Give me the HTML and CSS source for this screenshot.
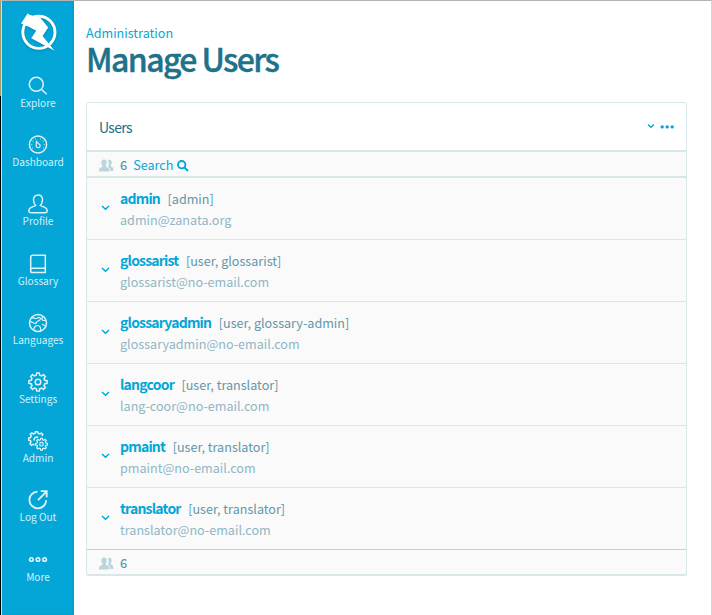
FILE: index.html
```html
<!DOCTYPE html>
<html lang="en">
<head>
<meta charset="utf-8">
<title>Manage Users</title>
<link rel="stylesheet" href="styles.css">
</head>
<body>
<div class="app">
  <div class="edge"></div>
  <nav class="sidebar">
    <a class="logo">
      <svg width="38" height="40" viewBox="0 0 38 40"><circle cx="18.9" cy="19.3" r="16.1" fill="none" stroke="#fff" stroke-width="2.9"/><path d="M7.8 .2 L9.6 1.8 L20.5 5 L28.2 14.6 L22.6 23 L34.5 37.7 L11.2 25.2 L16.2 17.8 L8.2 13.6 L1 10.4 Z" fill="#fff"/></svg>
    </a>
    <a class="item"><svg class="icon" viewBox="0 0 20 20"><circle cx="8.3" cy="8.3" r="7"/><path d="M13.3 13.3 L18.7 18.2"/></svg><span>Explore</span></a>
    <a class="item"><svg class="icon" viewBox="0 0 20 20"><circle cx="10" cy="9.5" r="8.6"/><path class="dots" d="M4.5 13v.1M3.8 9.5v.1M5 6v.1M7.5 3.8v.1M12.5 3.8v.1M15 6v.1M16.2 9.5v.1M15.5 13v.1"/><path d="M8.4 6.5 L10.7 8.8 A2 2 0 1 1 8.2 10.7 Z" stroke-width="1.2"/></svg><span>Dashboard</span></a>
    <a class="item"><svg class="icon" viewBox="0 0 20 20"><path d="M7.7 11.5C6.2 10.2 5.5 8 5.5 5.8C5.5 2.8 7.3.9 10 .9S14.5 2.8 14.5 5.8C14.5 8 13.8 10.2 12.3 11.5C14.3 13 19.2 12.7 19.2 16.5C19.2 18.2 18.4 18.8 17 18.8H3C1.6 18.8.8 18.2.8 16.5C.8 12.7 5.7 13 7.7 11.5Z"/></svg><span>Profile</span></a>
    <a class="item"><svg class="icon" viewBox="0 0 20 20"><path d="M17.3 14.3H4.5C1.8 14.3 2 18.5 4.5 18.5H17.3V1.2H4.8C3.4 1.2 2.7 1.8 2.7 3.2V16.5"/></svg><span>Glossary</span></a>
    <a class="item"><svg class="icon" viewBox="0 0 20 20"><circle cx="10" cy="10" r="8.5"/><path d="M3.5 5.2C6 3.7 6.2 6.5 9 5.2C11 3.8 13.3 4.5 12 6.8C10.5 8.5 9 7.5 8.3 9.8C6.7 12 4.6 8.3 1.6 8.7M14.7 3.4C12.5 7.2 15 8 18.2 7.2M6 17.4C5.4 14.4 8 11.6 10.7 12.8C14.2 14.3 11.3 16 13.2 17.8M14 11.2L17.5 13" stroke-width="1.2"/></svg><span>Languages</span></a>
    <a class="item"><svg class="icon" viewBox="0 0 20 20"><path d="M8.3 3.2 L8.7 .9 H11.3 L11.7 3.2 L13.6 4 L15.5 2.6 L17.4 4.5 L16 6.4 L16.8 8.3 L19.1 8.7 V11.3 L16.8 11.7 L16 13.6 L17.4 15.5 L15.5 17.4 L13.6 16 L11.7 16.8 L11.3 19.1 H8.7 L8.3 16.8 L6.4 16 L4.5 17.4 L2.6 15.5 L4 13.6 L3.2 11.7 L.9 11.3 V8.7 L3.2 8.3 L4 6.4 L2.6 4.5 L4.5 2.6 L6.4 4Z"/><circle cx="10" cy="10" r="2.8"/></svg><span>Settings</span></a>
    <a class="item"><svg class="icon" viewBox="0 0 20 20"><path d="M6.5 14.2L5 13.4L3.4 14.3L2 12.7L3 11.2L2.4 9.7L.7 9.1V7L2.5 6.5L3.2 4.9L2.3 3.3L3.9 2L5.4 2.9L7 2.3L7.5.8H9.6L10.2 2.3L11.8 2.9L13.3 2.1L14.8 3.5L14 5M6.2 9.6C5.5 7.2 8 5.4 10.2 6.3"/><g transform="translate(7 6.7) scale(.65)"><path stroke-width="1.8" d="M8.3 3.2 L8.7 .9 H11.3 L11.7 3.2 L13.6 4 L15.5 2.6 L17.4 4.5 L16 6.4 L16.8 8.3 L19.1 8.7 V11.3 L16.8 11.7 L16 13.6 L17.4 15.5 L15.5 17.4 L13.6 16 L11.7 16.8 L11.3 19.1 H8.7 L8.3 16.8 L6.4 16 L4.5 17.4 L2.6 15.5 L4 13.6 L3.2 11.7 L.9 11.3 V8.7 L3.2 8.3 L4 6.4 L2.6 4.5 L4.5 2.6 L6.4 4Z"/><circle cx="10" cy="10" r="2.8" stroke-width="1.8"/></g></svg><span>Admin</span></a>
    <a class="item"><svg class="icon" viewBox="0 0 20 20"><path d="M9.5 1.6A8.4 8.4 0 1 0 18.2 10.2M10 10.2L18.2 1.8M12.7 1.2H18.7V7.2" stroke-width="1.8"/></svg><span>Log Out</span></a>
    <a class="item"><svg class="icon" viewBox="0 0 20 20"><g stroke-width="1.6"><circle cx="3.4" cy="9.5" r="1.8"/><circle cx="10" cy="9.5" r="1.8"/><circle cx="16.6" cy="9.5" r="1.8"/></g></svg><span>More</span></a>
  </nav>
  <main class="main">
    <a class="crumb">Administration</a>
    <h1>Manage Users</h1>
    <section class="card">
      <header class="card-head"><h2>Users</h2><svg width="28" height="8" viewBox="0 0 28 8"><path d="M2 1.5L5 4.3L8 1.5" fill="none" stroke="#03a6d7" stroke-width="1.3"/><g fill="#03a6d7"><circle cx="16.2" cy="3.9" r="1.7"/><circle cx="21.2" cy="3.9" r="1.7"/><circle cx="26.2" cy="3.9" r="1.7"/></g></svg></header>
      <div class="bar search"><svg class="people" viewBox="0 0 15 13"><path d="M9 1.2C11-.1 13 1.2 12.7 3.5C12.6 5 11.8 5.8 11.7 7.2L14.2 8.8V12H11.2C11.2 9.5 10.5 9 8.7 7.8C10.2 6 9.9 3.5 9 1.2Z"/><path d="M5 .4C7.3.4 8 2 7.7 4C7.5 5.5 6.7 6 6.7 7.6C8 8.8 10.3 8.8 10.4 11V12.6H0V11C.1 8.8 2.3 8.8 3.5 7.6C3.5 6 2.5 5.3 2.4 4C2.1 2 2.8.4 5 .4Z"/></svg><b>6</b><a>Search</a><svg class="find" viewBox="0 0 12 12"><circle cx="4.7" cy="4.7" r="3.7"/><path d="M7.5 7.5L11 11"/></svg></div>
      <ul>
        <li><svg class="chev" viewBox="0 0 9 6"><path d="M1 1L4.5 4.2L8 1"/></svg><div><p><a>admin</a><span>[admin]</span></p><p class="mail">admin@zanata.org</p></div></li>
        <li><svg class="chev" viewBox="0 0 9 6"><path d="M1 1L4.5 4.2L8 1"/></svg><div><p><a>glossarist</a><span>[user, glossarist]</span></p><p class="mail">glossarist@no-email.com</p></div></li>
        <li><svg class="chev" viewBox="0 0 9 6"><path d="M1 1L4.5 4.2L8 1"/></svg><div><p><a>glossaryadmin</a><span>[user, glossary-admin]</span></p><p class="mail">glossaryadmin@no-email.com</p></div></li>
        <li><svg class="chev" viewBox="0 0 9 6"><path d="M1 1L4.5 4.2L8 1"/></svg><div><p><a>langcoor</a><span>[user, translator]</span></p><p class="mail">lang-coor@no-email.com</p></div></li>
        <li><svg class="chev" viewBox="0 0 9 6"><path d="M1 1L4.5 4.2L8 1"/></svg><div><p><a>pmaint</a><span>[user, translator]</span></p><p class="mail">pmaint@no-email.com</p></div></li>
        <li><svg class="chev" viewBox="0 0 9 6"><path d="M1 1L4.5 4.2L8 1"/></svg><div><p><a>translator</a><span>[user, translator]</span></p><p class="mail">translator@no-email.com</p></div></li>
      </ul>
      <div class="bar"><svg class="people" viewBox="0 0 15 13"><path d="M9 1.2C11-.1 13 1.2 12.7 3.5C12.6 5 11.8 5.8 11.7 7.2L14.2 8.8V12H11.2C11.2 9.5 10.5 9 8.7 7.8C10.2 6 9.9 3.5 9 1.2Z"/><path d="M5 .4C7.3.4 8 2 7.7 4C7.5 5.5 6.7 6 6.7 7.6C8 8.8 10.3 8.8 10.4 11V12.6H0V11C.1 8.8 2.3 8.8 3.5 7.6C3.5 6 2.5 5.3 2.4 4C2.1 2 2.8.4 5 .4Z"/></svg><b>6</b></div>
    </section>
  </main>
</div>
</body>
</html>
```
FILE: styles.css
```css
* { box-sizing: border-box; }
body, h1, h2, p, ul { margin: 0; padding: 0; }
body { font-family: "Noto Sans CJK SC", "Noto Sans", sans-serif; font-size: 12.6px; background: #fff; color: #20718a; overflow: hidden; }
.app { display: flex; height: 615px; border-top: 1px solid #b4b4b4; border-right: 1px solid #d5d5d5; }
.edge { width: 2px; border-right: 1px solid #c4e4ee; background: linear-gradient(#a59a63 95px, #000 95px); }
.sidebar { width: 72px; background: #03a6d7; box-shadow: inset -1px 0 2px #0297c6; display: flex; flex-direction: column; align-items: center; }
.logo { height: 66px; padding: 12px 0 0 1px; }
.logo svg { display: block; filter: drop-shadow(0 1px 1px #0288b0); }
.item { height: 59.2px; display: flex; flex-direction: column; align-items: center; padding-top: 9px; color: #d5f0f9; font-size: 10.1px; line-height: 14px; }
.icon { display: block; width: 20px; height: 20px; flex: none; fill: none; stroke: #dff4fb; stroke-width: 1.5; }
.dots { stroke-linecap: round; stroke-width: 1; }
.main { padding: 23px 24px 0 12px; flex: 1; }
.crumb { display: block; line-height: 18px; color: #03a6d7; }
h1 { font-size: 32px; line-height: 32px; font-weight: 500; letter-spacing: -1.6px; -webkit-text-stroke: .4px #20718a; }
.card { margin-top: 28px; border: 1px solid #d8e7ea; border-bottom-width: 2px; border-radius: 3px; background: #fafafa; overflow: hidden; }
.card-head { height: 49px; padding: 0 12px; background: #fff; border-bottom: 2px solid #d8e7ea; display: flex; align-items: center; justify-content: space-between; }
h2 { font-size: 14px; font-weight: 400; letter-spacing: -.7px; line-height: 20px; }
.bar { height: 24px; padding: 2px 0 0 12px; display: flex; align-items: center; line-height: 20px; }
.search { height: 26px; border-bottom: 2px solid #d8e7ea; }
.search a { color: #03a6d7; margin-left: 6px; }
.people { width: 15px; height: 13px; margin-right: 6px; fill: #bcd4dc; }
.bar b { font-weight: 500; color: #6297a7; }
.find { width: 12px; height: 12px; margin: 2px 0 0 4px; fill: none; stroke: #03a6d7; stroke-width: 1.9; }
ul { list-style: none; }
li { height: 62px; border-bottom: 1px solid #d8e7ea; display: flex; padding: 10px 0 0 14px; line-height: 21px; }
li:last-child { border-color: #bcd4dc; }
.chev { width: 9px; height: 6px; margin: 17px 10px 0 0; fill: none; stroke: #03a6d7; stroke-width: 1.5; }
li p { height: 21px; display: flex; }
li a { font-size: 14px; font-weight: 700; letter-spacing: -.8px; color: #03a6d7; margin-right: 7.5px; }
li span { color: #6297a7; }
.mail { color: #8fb6c4; }
```
